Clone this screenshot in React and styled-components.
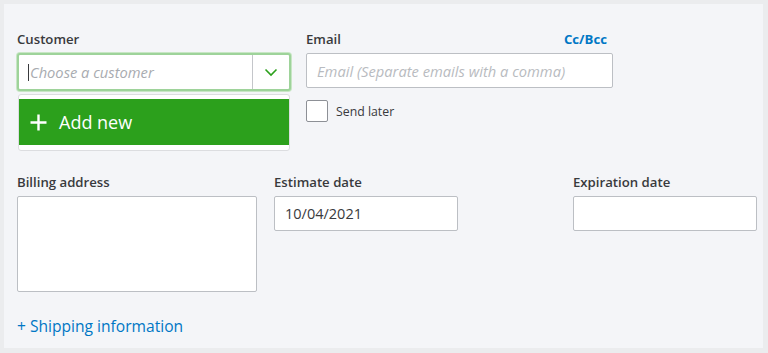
import React from "react";
import styled, { createGlobalStyle } from "styled-components";

const Global = createGlobalStyle`
  html, body { margin: 0; padding: 0; background: #ebecee; }
  body { font-family: "Open Sans", "Noto Sans", sans-serif; }
  * { box-sizing: border-box; }
`;

const Frame = styled.div`
  width: 768px;
  height: 353px;
  padding: 4px 5px 5px 4px;
  background: #ebecee;
`;

const Panel = styled.div`
  width: 100%;
  height: 100%;
  background: #f4f5f8;
  padding: 27px 0 0 13px;
  display: flex;
  flex-direction: column;
`;

const TopRow = styled.div`
  display: flex;
  gap: 15px;
  align-items: flex-start;
`;

const Field = styled.div`
  display: flex;
  flex-direction: column;
  width: ${(p) => p.$w}px;
  position: relative;
`;

const LabelRow = styled.div`
  display: flex;
  justify-content: space-between;
  align-items: center;
  height: 16px;
  margin-bottom: 6px;
  padding-right: ${(p) => p.$pr || 0}px;
`;

const Label = styled.label`
  font-size: 13.2px;
  font-weight: 600;
  color: #393a3d;
`;

const LinkText = styled.a`
  font-size: 13.2px;
  font-weight: 700;
  color: #0077c5;
  text-decoration: none;
`;

const Combo = styled.div`
  display: flex;
  height: 38px;
  border: 2px solid #9ed39a;
  border-radius: 3px;
  background: #fff;
  box-shadow: 0 0 0 1px #c8e6c5;
`;

const ComboText = styled.div`
  flex: 1;
  display: flex;
  align-items: center;
  padding-left: 9px;
  font-size: 14.7px;
  font-style: italic;
  color: #a8abb0;
  border-right: 1px solid #c4c6ca;
`;

const Caret = styled.span`
  display: inline-block;
  width: 1px;
  height: 17px;
  background: #393a3d;
  margin-right: 1px;
`;

const ComboButton = styled.div`
  width: 36px;
  display: flex;
  align-items: center;
  justify-content: center;
`;

const Menu = styled.div`
  position: absolute;
  top: 63px;
  left: 1px;
  width: 272px;
  height: 57px;
  background: #fff;
  border: 1px solid #dcdde0;
  border-radius: 3px;
  padding: 4px 0 0 0;
`;

const MenuItem = styled.div`
  height: 46px;
  background: #2ca01c;
  display: flex;
  align-items: center;
  padding-left: 11px;
  gap: 12px;
  color: #fff;
  font-size: 18px;
`;

const TextInput = styled.div`
  height: ${(p) => p.$h || 35}px;
  background: #fff;
  border: 1px solid #bcbfc4;
  border-radius: 2px;
  display: flex;
  align-items: center;
  padding-left: 10px;
  font-size: 14.5px;
  color: #393a3d;
`;

const Placeholder = styled.span`
  font-style: italic;
  font-size: 14.7px;
  color: #b8bbc0;
`;

const CheckRow = styled.div`
  display: flex;
  align-items: center;
  gap: 8px;
  margin-top: 12px;
`;

const Box = styled.div`
  width: 22px;
  height: 22px;
  border: 1px solid #8d9096;
  border-radius: 2px;
  background: #fff;
`;

const CheckLabel = styled.span`
  font-size: 12.3px;
  color: #393a3d;
`;

const SecondRow = styled.div`
  display: flex;
  margin-top: 52px;
`;

const Spacer = styled.div`
  width: ${(p) => p.$w}px;
`;

const Shipping = styled.a`
  margin-top: 23px;
  font-size: 15.6px;
  color: #0077c5;
  text-decoration: none;
`;

export default function App() {
  return (
    <>
      <Global />
      <Frame>
        <Panel>
          <TopRow>
            <Field $w={274}>
              <LabelRow>
                <Label>Customer</Label>
              </LabelRow>
              <Combo>
                <ComboText>
                  <Caret />
                  Choose a customer
                </ComboText>
                <ComboButton>
                  <svg width="14" height="9" viewBox="0 0 14 9">
                    <path d="M1.5 1.5 L7 7 L12.5 1.5" fill="none" stroke="#2ca01c" strokeWidth="1.6" />
                  </svg>
                </ComboButton>
              </Combo>
              <Menu>
                <MenuItem>
                  <svg width="17" height="17" viewBox="0 0 17 17">
                    <path d="M8.5 0.5 V16.5 M0.5 8.5 H16.5" stroke="#fff" strokeWidth="2.4" />
                  </svg>
                  Add new
                </MenuItem>
              </Menu>
            </Field>
            <Field $w={307}>
              <LabelRow $pr={6}>
                <Label>Email</Label>
                <LinkText href="#">Cc/Bcc</LinkText>
              </LabelRow>
              <TextInput>
                <Placeholder>Email (Separate emails with a comma)</Placeholder>
              </TextInput>
              <CheckRow>
                <Box />
                <CheckLabel>Send later</CheckLabel>
              </CheckRow>
            </Field>
          </TopRow>
          <SecondRow>
            <Field $w={240}>
              <LabelRow>
                <Label>Billing address</Label>
              </LabelRow>
              <TextInput $h={96} />
            </Field>
            <Spacer $w={17} />
            <Field $w={184}>
              <LabelRow>
                <Label>Estimate date</Label>
              </LabelRow>
              <TextInput>10/04/2021</TextInput>
            </Field>
            <Spacer $w={115} />
            <Field $w={184}>
              <LabelRow>
                <Label>Expiration date</Label>
              </LabelRow>
              <TextInput />
            </Field>
          </SecondRow>
          <Shipping href="#">+ Shipping information</Shipping>
        </Panel>
      </Frame>
    </>
  );
}
